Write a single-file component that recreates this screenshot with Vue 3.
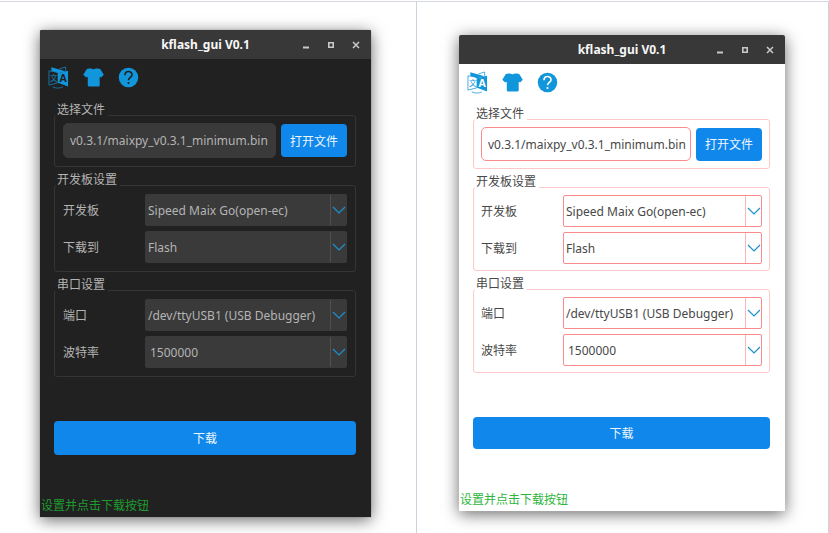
<script setup>
const themes = [
  { id: 'dark', file: 'v0.3.1/maixpy_v0.3.1_minimum.bin' },
  { id: 'light', file: 'v0.3.1/maixpy_v0.3.1_minimum.bin' },
]

const groups = [
  {
    title: '开发板设置',
    rows: [
      { key: 'board', label: '开发板', value: 'Sipeed Maix Go(open-ec)' },
      { key: 'target', label: '下载到', value: 'Flash' },
    ],
  },
  {
    title: '串口设置',
    rows: [
      { key: 'port', label: '端口', value: '/dev/ttyUSB1 (USB Debugger)' },
      { key: 'baud', label: '波特率', value: '1500000', editable: true },
    ],
  },
]
</script>

<template>
  <main class="page">
    <div v-for="t in themes" :key="t.id" class="cell" :class="t.id">
      <section class="window">
        <header class="titlebar">
          <h1>kflash_gui V0.1</h1>
          <div class="controls">
            <button type="button" aria-label="Minimize">
              <svg viewBox="0 0 8 8"><path d="M1 6.5h6" stroke-width="2" /></svg>
            </button>
            <button type="button" aria-label="Maximize">
              <svg viewBox="0 0 8 8"><path d="M1.8 1.8h4.4v4.4h-4.4z" stroke-width="1.6" /></svg>
            </button>
            <button type="button" aria-label="Close">
              <svg viewBox="0 0 8 8"><path d="M1 1l6 6M7 1l-6 6" stroke-width="1.5" /></svg>
            </button>
          </div>
        </header>

        <nav class="toolbar">
          <button type="button" aria-label="Language">
            <svg viewBox="0 0 22 24">
              <path d="M3.5 1.2L18.500 5.500 11 7.500 3.500 5z" fill="#1296db" />
              <path d="M12 3L18.500 1v4.500" class="thin" />
              <path d="M10.500 6.500L1 5v15L10.500 17.500z" class="thin" />
              <path d="M10.500 7.500L21 5v16.500L10.500 17.500z" fill="#1296db" />
              <path d="M5 21.800c3 1.800 7.500 1.600 10.500 0" class="thin" />
              <text x="2" y="15.500" class="zh">文</text>
              <text x="15.800" y="17" class="en">A</text>
            </svg>
          </button>
          <button type="button" aria-label="Skin">
            <svg viewBox="0 0 22 24">
              <path
                d="M6.500 2.500h2.200c1.300 1 3.300 1 4.600 0h2.200L18 3.200 21.800 9 19 12 17.500 11.300v8.700q0 1.500-1.500 1.500H6.500Q5 21.500 5 20v-8.700L3.300 12 .300 9 4 3.200z"
                fill="#1296db"
              />
            </svg>
          </button>
          <button type="button" aria-label="Help">
            <svg viewBox="0 0 22 24">
              <circle cx="11" cy="12" r="10.200" fill="#1296db" />
              <path d="M7.300 9.600c0-5 7.400-5 7.400-.6 0 2.800-3.700 2.900-3.700 6" class="mark" />
              <circle cx="11" cy="17.800" r="1.100" class="dot" />
            </svg>
          </button>
        </nav>

        <form class="body" @submit.prevent>
          <fieldset>
            <legend>选择文件</legend>
            <div class="box file">
              <input type="text" :value="t.file" aria-label="选择文件" />
              <button type="button" class="primary open">打开文件</button>
            </div>
          </fieldset>

          <fieldset v-for="g in groups" :key="g.title">
            <legend>{{ g.title }}</legend>
            <div class="box rows">
              <div v-for="r in g.rows" :key="r.key" class="row">
                <label :for="t.id + r.key">{{ r.label }}</label>
                <div class="combo" :class="{ editable: r.editable }">
                  <select :id="t.id + r.key">
                    <option>{{ r.value }}</option>
                  </select>
                  <span class="arrow">
                    <svg viewBox="0 0 14 8"><path d="M1 1l6 6 6-6" /></svg>
                  </span>
                </div>
              </div>
            </div>
          </fieldset>

          <button type="submit" class="primary download">下载</button>
        </form>

        <p class="status">设置并点击下载按钮</p>
      </section>
    </div>
  </main>
</template>

<style>
body {
  margin: 0;
  background: #fff;
}
</style>

<style scoped>
.page {
  display: grid;
  grid-template-columns: 417fr 412fr;
  min-height: 100vh;
  box-sizing: border-box;
  padding-top: 1px;
  overflow: hidden;
  font-family: "Noto Sans", "Noto Sans CJK SC", sans-serif;
  font-size: 12px;
}
.cell {
  border-top: 1px solid #d3d8e2;
  border-right: 1px solid #ccd3de;
}
.dark {
  --bg: #212121;
  --text: #b4b4b4;
  --group: #353535;
  --field: #3a3a3a;
  --field-border: #3a3a3a;
  --divider: #505050;
  --zh: #1687c2;
  --status: #1f9c2f;
  --edge: #555;
  --row-padding: 8px;
  --field-height: 35px;
  --action-height: 34px;
  padding: 28px 45px 16px 40px;
}
.light {
  --bg: #fff;
  --text: #484848;
  --group: #ffc9c9;
  --field: #fff;
  --field-border: #fb8a8a;
  --divider: #fdb5b5;
  --zh: #1296db;
  --status: #2db53c;
  --edge: #d0d0d0;
  --row-padding: 7px 7px 6px;
  --field-height: 34px;
  --action-height: 32px;
  padding: 33px 43px 20px 42px;
}
.window {
  background: var(--bg);
  color: var(--text);
  border-radius: 2px 2px 0 0;
  box-shadow: 0 0 1px var(--edge), 0 3px 16px rgba(0, 0, 0, 0.6);
}
.titlebar {
  display: grid;
  grid-template-columns: 1fr auto 1fr;
  align-items: center;
  height: 29px;
  background: #383838;
  border-radius: 2px 2px 0 0;
}
h1 {
  grid-column: 2;
  margin: 0;
  font-size: 12px;
  line-height: 16px;
  font-weight: 700;
  color: #f7f7f7;
}
button {
  border: 0;
  padding: 0;
  background: none;
  font: inherit;
}
.controls {
  display: flex;
  justify-content: flex-end;
  padding-right: 3px;
}
.controls button {
  display: flex;
  align-items: center;
  justify-content: center;
  width: 25px;
  height: 24px;
}
.controls svg {
  width: 8px;
  height: 8px;
  fill: none;
  stroke: #c9c9c9;
}
.toolbar {
  display: flex;
  gap: 14px;
  padding: 7px 8px 0;
}
.toolbar button,
.toolbar svg {
  display: block;
  width: 21px;
  height: 23px;
}
.thin {
  fill: none;
  stroke: var(--zh);
  stroke-width: 0.8;
}
.zh {
  font-size: 8px;
  fill: var(--zh);
}
.en {
  font-size: 11px;
  font-weight: 700;
  text-anchor: middle;
  fill: var(--bg);
}
.mark {
  fill: none;
  stroke: var(--bg);
  stroke-width: 1.7;
}
.dot {
  fill: var(--bg);
}
.body {
  padding: 13px 15px 0 14px;
}
.light .body {
  padding-top: 12px;
}
fieldset {
  min-width: 0;
  margin: 0 0 5px;
  padding: 0;
  border: 0;
}
legend {
  position: relative;
  margin-left: 2px;
  padding: 0 3px 0 1px;
  line-height: 16px;
  background: var(--bg);
}
.box {
  margin-top: -3px;
  border: 1px solid var(--group);
  border-radius: 3px;
}
.file {
  display: flex;
  align-items: center;
  gap: 5px;
  padding: 7px 8px 8px;
}
.light .file {
  padding: 7px;
}
input {
  flex: 1;
  min-width: 0;
  height: var(--field-height);
  box-sizing: border-box;
  padding: 0 4px 0 6px;
  border: 1px solid var(--field-border);
  border-radius: 5px;
  background: var(--field);
  color: var(--text);
  font: inherit;
}
.primary {
  border-radius: 4px;
  background: #1088eb;
  color: #eef6ff;
}
.open {
  width: 66px;
  height: 33px;
}
.rows {
  display: grid;
  gap: 5px;
  padding: var(--row-padding);
}
.row {
  display: grid;
  grid-template-columns: 82px 1fr;
  align-items: center;
}
.combo {
  display: grid;
}
select {
  grid-area: 1 / 1;
  width: 100%;
  height: 32px;
  box-sizing: border-box;
  padding: 0 20px 0 2px;
  border: 1px solid var(--field-border);
  border-radius: 2px;
  background: var(--field);
  color: var(--text);
  font: inherit;
  appearance: none;
}
.editable select {
  padding-left: 4px;
}
.arrow {
  grid-area: 1 / 1;
  justify-self: end;
  display: flex;
  align-items: center;
  justify-content: center;
  width: 16px;
  margin-block: 1px;
  border-left: 1px solid var(--divider);
  pointer-events: none;
}
.arrow svg {
  width: 14px;
  height: 8px;
  fill: none;
  stroke: #1a90d0;
  stroke-width: 1.2;
}
.download {
  display: block;
  width: 100%;
  height: var(--action-height);
  margin-top: 44px;
}
.status {
  margin: 0;
  padding: 43px 1px 3px;
  line-height: 16px;
  color: var(--status);
}
</style>
